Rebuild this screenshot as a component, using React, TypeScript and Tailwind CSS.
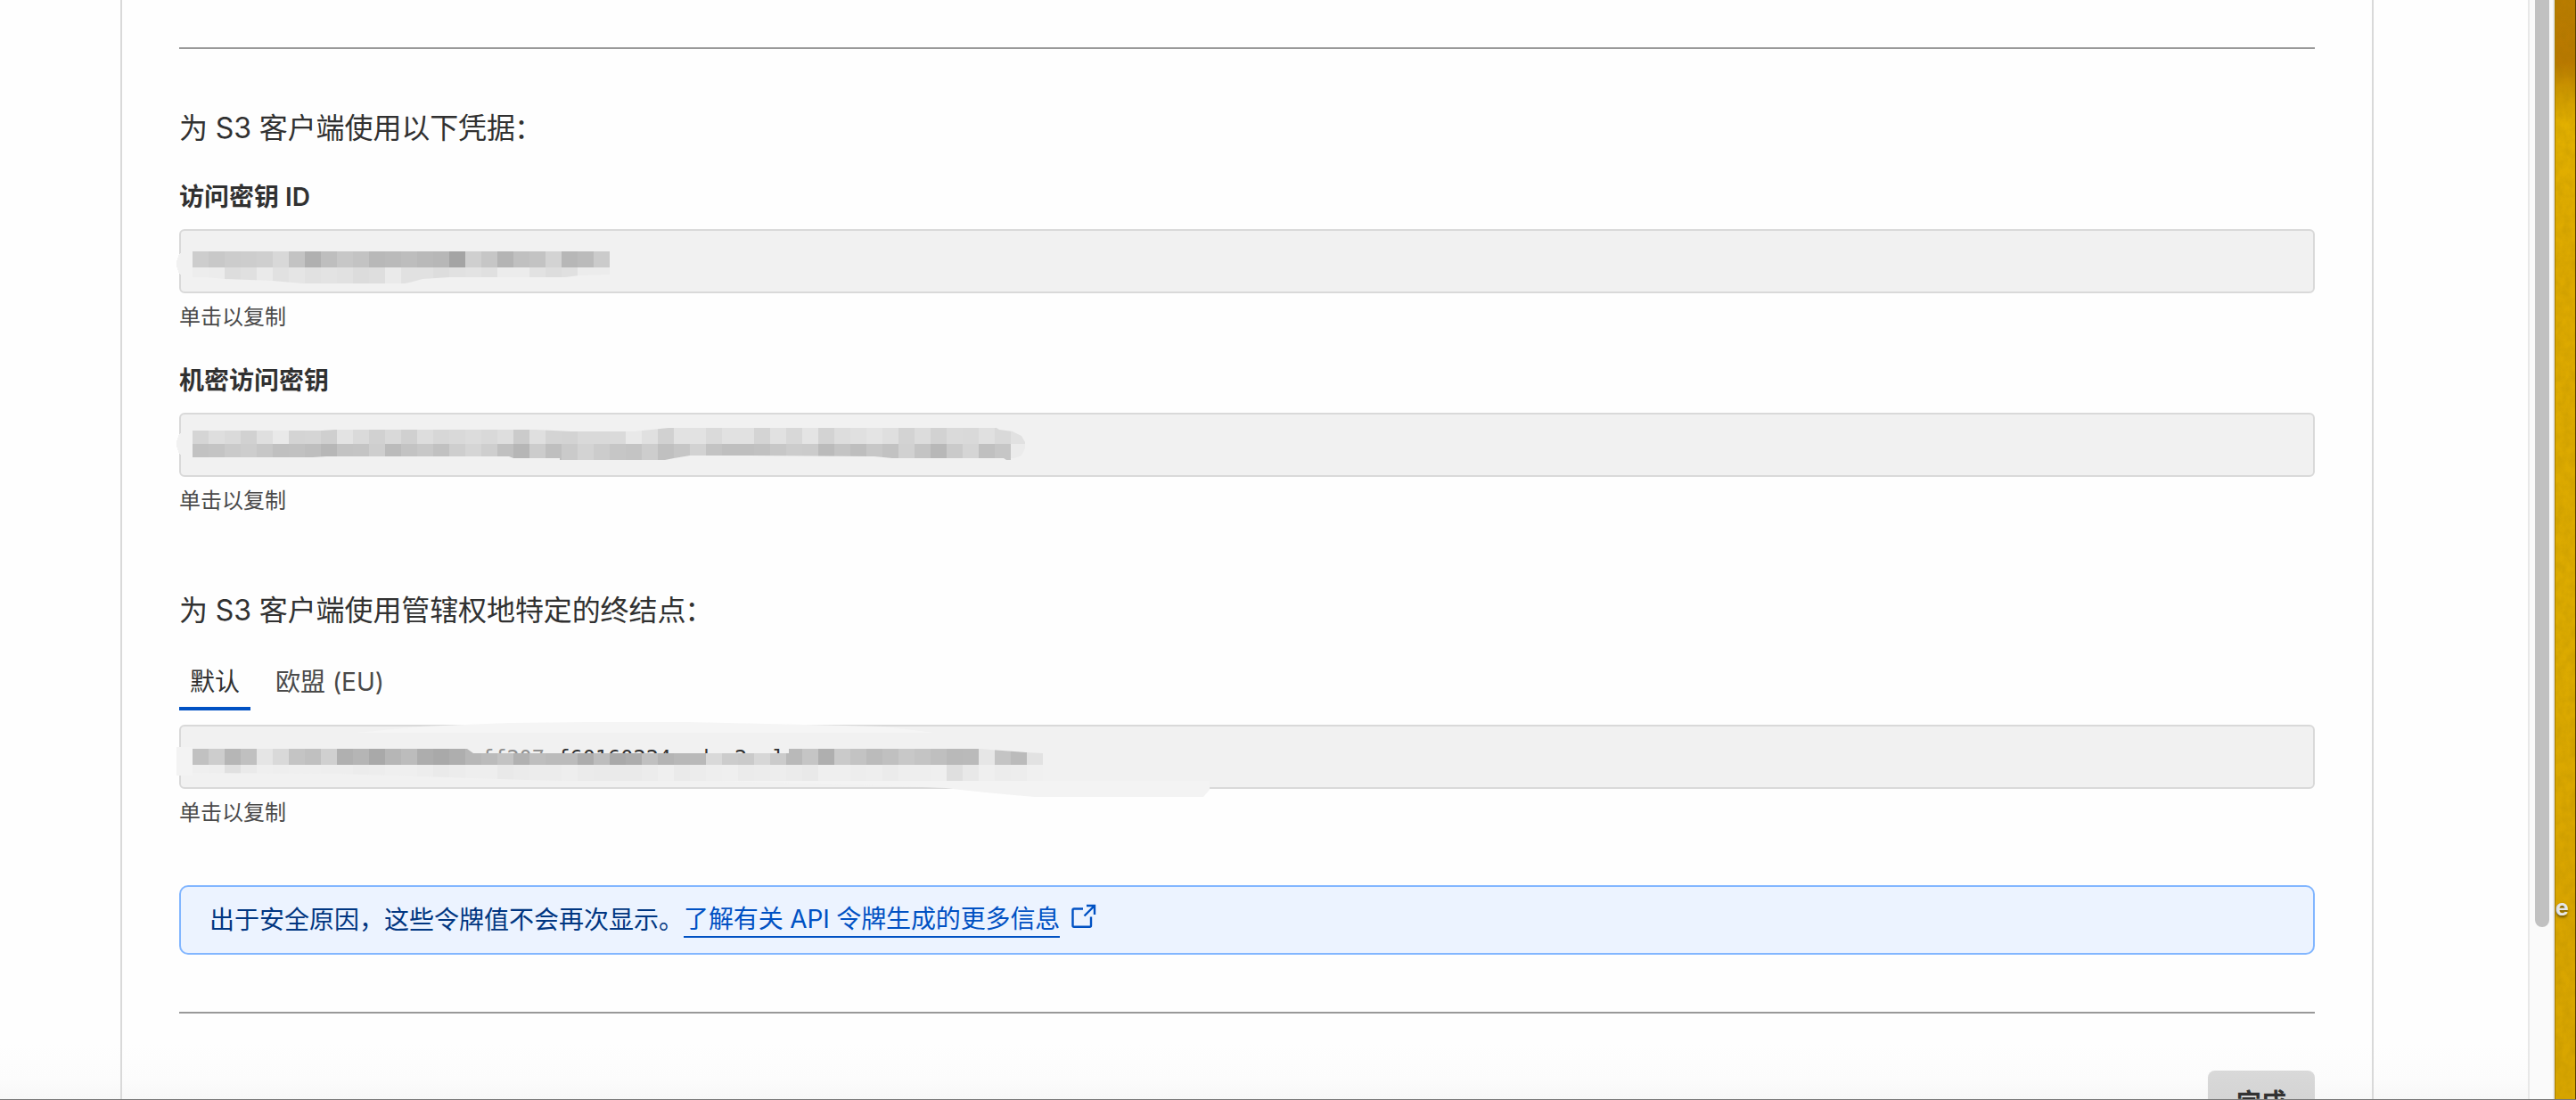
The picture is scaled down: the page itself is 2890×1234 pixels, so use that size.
import { useId } from "react"

const CELL = 18

type Row = { y: number; h: number; shades: string }

const accessKeyRows: Row[] = [
  { y: 25, h: 18, shades: "cd c8 cc cd cf d8 c3 b0 be c7 c3 b8 ba bd b9 b7 a4 cf c6 b4 c0 c3 d3 b7 bb cb" },
  { y: 43, h: 18, shades: "ed ec dd e0 ea e1 e5 e1 e3 e1 dc de ea e1 e1 dd e1 e3 e0 ec ec e2 dd e0 ec ec" },
]

const secretKeyRows: Row[] = [
  {
    y: 17,
    h: 18,
    shades:
      "d5 de da d1 df e9 d4 d5 cf e3 da d1 d9 d0 dd d7 d9 dc d9 de cb df d4 d3 d9 d9 da e9 e0 d1 e2 e2 da e1 e1 d4 e1 d8 e4 d3 dd e0 e4 df d3 dc d2 da d9 e0 d9 e1",
  },
  {
    y: 35,
    h: 18,
    shades:
      "c2 c4 ca cd c7 c0 c1 be b7 c3 c4 ce bb c3 c8 c1 ce d5 ce c0 b6 cc bf ca d3 cc c6 c4 cd c0 c6 d2 c3 bf bf c1 c7 cc cb bb c4 be c7 c2 d1 c4 b8 ca d5 c0 c6 eb",
  },
]

const endpointRows: Row[] = [
  {
    y: 27,
    h: 18,
    shades:
      "c1 cd b6 c0 e5 d9 c4 c0 d0 b0 b5 a9 b6 bc ad a9 ae b7 bb c3 b1 be bb bb ad bd a9 ad c0 b4 b8 b9 d9 cc ca d7 cb b9 c5 af ca c3 bb c0 c8 c4 bf b9 ba e6 c4 bb e2",
  },
  {
    y: 45,
    h: 18,
    shades:
      "ef ee e0 ea ef ee ef ef ee ee ec ed ef ef ed ea ec ee ee e9 eb ec ec ee eb ea ea ea ec ef ea ec ee ef eb ec ed eb e9 ef ef ed ee eb ee ee ef df e8 ef ec ed f0",
  },
]

function Mosaic({ rows, clip, before }: any) {
  const id = useId()

  return (
    <svg
      className="pointer-events-none absolute -left-[7px] -top-[12px] h-[100px] w-[1200px]"
      viewBox="-5 -10 1200 100"
      shapeRendering="crispEdges"
    >
      <clipPath id={id}>
        <polygon points={clip} />
      </clipPath>
      {before}
      <g clipPath={`url(#${id})`}>
        {rows.map((row: Row) =>
          row.shades.split(" ").map((s, i) => (
            <rect key={row.y + "-" + i} x={15 + i * CELL} y={row.y} width={CELL} height={row.h} fill={`#${s}${s}${s}`} />
          ))
        )}
      </g>
    </svg>
  )
}

function CopyField({ children }: any) {
  return (
    <>
      <div className="relative h-[72px] rounded-[6px] border-2 border-[#d9d9d9] bg-[#f1f1f1]">{children}</div>
      <p className="mt-[9px] text-[24px] leading-[36px] text-[#4a4a4a]">单击以复制</p>
    </>
  )
}

function ExternalIcon() {
  return (
    <svg className="ml-[13px] mt-[-9px] h-[28px] w-[28px]" viewBox="0 0 28 28" fill="none" stroke="#0051c3" strokeWidth="2.4">
      <path d="M13 5.5H3Q1.500 5.500 1.500 7V24.300Q1.500 25.800 3 25.800H20.500Q22 25.800 22 24.300V14.500" />
      <path d="M14.500 13.500L25.500 2.500M17 2H26V12" />
    </svg>
  )
}

function Desktop() {
  return (
    <div className="relative h-full w-[24px] overflow-hidden border-l border-r border-l-[#a57c00] border-r-[#5c4300] bg-[linear-gradient(180deg,#b97c00_0px,#b87800_70px,#cf9a00_105px,#e2b000_140px,#dda900_300px,#dcab00_700px,#d9a500_1000px,#d8a600_1234px)]">
      <svg className="absolute left-0 top-0 h-full w-full opacity-15">
        <filter id="grain">
          <feTurbulence type="fractalNoise" baseFrequency="0.12 0.09" numOctaves="3" seed="4" />
          <feColorMatrix values="0 0 0 0 0.3  0 0 0 0 0.18  0 0 0 0 0  2 0 0 0 -0.6" />
        </filter>
        <rect width="100%" height="100%" filter="url(#grain)" />
      </svg>
      <span className="absolute left-[0px] top-[1003px] text-[25px] font-bold leading-[30px] text-[#e6e6e6] [text-shadow:0_2px_3px_rgba(0,0,0,0.5)]">
        e
      </span>
    </div>
  )
}

export default function App() {
  return (
    <div className="relative flex h-[1234px] w-[2890px] overflow-hidden bg-[#fefefe] font-['Inter','Noto_Sans_CJK_SC',sans-serif] text-[#313131]">
      <div className="flex h-full w-[2836px] bg-[linear-gradient(180deg,#fefefe_1170px,#fcfcfc_1210px,#f7f7f7_1234px)] pl-[135px]">
        <main className="flex h-full w-[2528px] flex-col border-x-2 border-[#d9d9d9] px-[64px] pt-[53px] [&>*]:shrink-0">
          <div className="h-[2px] bg-[#999999]" />

          <h2 className="mt-[65px] text-[32px] leading-[48px] tracking-[-0.1px]">
            为 S3 客户端使用以下凭据<span className="-ml-px">：</span>
          </h2>

          <h3 className="mt-8 mb-[15px] text-[28px] font-semibold leading-[42px]">访问密钥 ID</h3>
          <CopyField>
            <Mosaic
              rows={accessKeyRows}
              clip="15,25 483,25 483,51 448,52 433,54 393,54 303,54 273,56 258,60 253,61 139,61 105,58 51,56 30,54 15,54"
              before={<ellipse cx="6" cy="39" rx="9" ry="14" fill="#f1f1f1" />}
            />
          </CopyField>

          <h3 className="mt-8 mb-[15px] text-[28px] font-semibold leading-[42px]">机密访问密钥</h3>
          <CopyField>
            <Mosaic
              rows={secretKeyRows}
              clip="15,20 160,20 175,19 400,19 440,21 510,21 549,17 917,17 920,19 935,21 945,26 949,33 949,40 945,48 937,51 933,51 933,53 928,53 925,51 800,51 780,49 640,48 573,48 555,51 545,53 427,53 427,51 375,51 370,49 165,49 150,50 15,50"
              before={<ellipse cx="6" cy="35" rx="9" ry="14" fill="#f1f1f1" />}
            />
          </CopyField>

          <h2 className="mt-[81px] text-[32px] leading-[48px] tracking-[-0.1px]">
            为 S3 客户端使用管辖权地特定的终结点<span className="-ml-px">：</span>
          </h2>

          <div className="mt-[35px] mb-4 flex gap-4 text-[28px] leading-[42px]">
            <button className="border-b-4 border-[#0051c3] px-3 pb-[7px]">默认</button>
            <button className="border-b-4 border-transparent px-3 pb-[7px] text-[#4a4a4a]">欧盟 (EU)</button>
          </div>
          <CopyField>
            <svg
              className="pointer-events-none absolute -left-[7px] -top-[12px] h-[100px] w-[1200px]"
              viewBox="-5 -10 1200 100"
            >
              <path d="M200 9L270 2L370 -2L460 -3L570 -3L660 -1L790 2L847 9Z" fill="#f5f5f5" />
              <path d="M600 63H1156V73L1149 81H960Q900 76 860 71L780 68Z" fill="#f3f3f3" />
              <rect x="-3" y="25" width="18" height="32" fill="#f3f3f3" />
            </svg>
            <p className="absolute left-[337px] top-[21px] whitespace-pre font-['DejaVu_Sans_Mono',monospace] text-[23.6px] leading-[28px]">
              <span className="text-[#909090]">ff207</span> f60160224ccd.r2.cl
            </p>
            <Mosaic
              rows={endpointRows}
              clip="15,27 323,27 330,32 684,32 684,27 900,27 910,28 950,31 969,32 969,63 440,63 390,62 240,57 180,55 15,54"
            />
          </CopyField>

          <div className="mt-[63px] flex h-[78px] items-center rounded-[10px] border-2 border-[#82b6ff] bg-[#ecf3ff] px-8 text-[28px] text-[#003681]">
            <p className="leading-[42px]">出于安全原因，这些令牌值不会再次显示。</p>
            <a className="h-[40px] border-b-2 border-[#0051c3] leading-[38px] tracking-[-0.13px] text-[#0051c3]">
              了解有关 API 令牌生成的更多信息
            </a>
            <ExternalIcon />
          </div>

          <div className="mt-16 h-[2px] bg-[#999999]" />

          <button className="mt-16 h-[72px] w-[120px] self-end rounded-[8px] bg-[linear-gradient(180deg,#d9d9d9,#cdcdcd)] text-[28px] font-semibold">
            完成
          </button>
        </main>
      </div>

      <div className="h-full w-[30px] border-x-2 border-[#e8e8e8] bg-[#fafafa] px-[6px]">
        <div className="h-[1040px] w-[16px] rounded-t-[4px] rounded-b-full bg-[#c1c1c1]" />
      </div>
      <Desktop />
      <div className="absolute bottom-0 left-0 h-px w-[2890px] bg-[#777777]" />
    </div>
  )
}
